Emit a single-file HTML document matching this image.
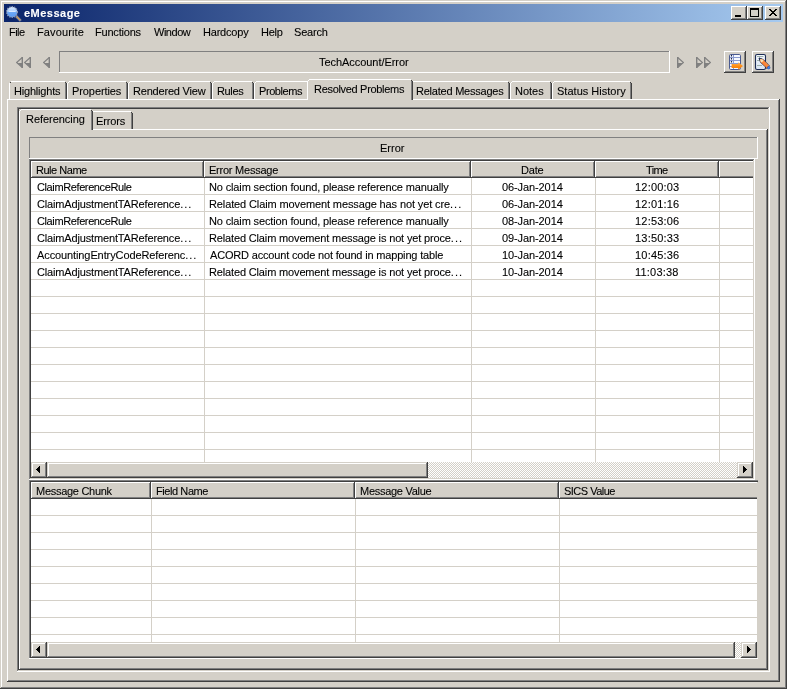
<!DOCTYPE html>
<html><head><meta charset="utf-8"><title>eMessage</title>
<style>
html,body{margin:0;padding:0}
body{width:787px;height:689px;overflow:hidden;background:#d4d0c8;position:relative;font:11px/13px "Liberation Sans",Arial,sans-serif;color:#000}
body>div,body>svg,#tx>span{position:absolute;display:block}
#tx{left:0;top:0;width:787px;height:689px;will-change:transform;-webkit-text-stroke:0.1px}
span{white-space:pre;transform-origin:0 0}
i{font-style:normal;letter-spacing:1px}
</style></head><body>
<div style="left:1px;top:1px;width:784px;height:1px;background:#ffffff;"></div>
<div style="left:1px;top:1px;width:1px;height:686px;background:#ffffff;"></div>
<div style="left:785px;top:1px;width:1px;height:687px;background:#808080;"></div>
<div style="left:1px;top:687px;width:785px;height:1px;background:#808080;"></div>
<div style="left:786px;top:0px;width:1px;height:689px;background:#404040;"></div>
<div style="left:0px;top:688px;width:787px;height:1px;background:#404040;"></div>
<div style="left:4px;top:4px;width:779px;height:18px;background:linear-gradient(to right,#0a246a,#a6caf0);"></div>
<div style="left:731px;top:6px;width:16px;height:14px;background:#d4d0c8;"></div>
<div style="left:731px;top:6px;width:15px;height:1px;background:#ffffff;"></div>
<div style="left:731px;top:6px;width:1px;height:13px;background:#ffffff;"></div>
<div style="left:732px;top:18px;width:14px;height:1px;background:#808080;"></div>
<div style="left:745px;top:7px;width:1px;height:12px;background:#808080;"></div>
<div style="left:731px;top:19px;width:16px;height:1px;background:#404040;"></div>
<div style="left:746px;top:6px;width:1px;height:14px;background:#404040;"></div>
<div style="left:747px;top:6px;width:16px;height:14px;background:#d4d0c8;"></div>
<div style="left:747px;top:6px;width:15px;height:1px;background:#ffffff;"></div>
<div style="left:747px;top:6px;width:1px;height:13px;background:#ffffff;"></div>
<div style="left:748px;top:18px;width:14px;height:1px;background:#808080;"></div>
<div style="left:761px;top:7px;width:1px;height:12px;background:#808080;"></div>
<div style="left:747px;top:19px;width:16px;height:1px;background:#404040;"></div>
<div style="left:762px;top:6px;width:1px;height:14px;background:#404040;"></div>
<div style="left:765px;top:6px;width:16px;height:14px;background:#d4d0c8;"></div>
<div style="left:765px;top:6px;width:15px;height:1px;background:#ffffff;"></div>
<div style="left:765px;top:6px;width:1px;height:13px;background:#ffffff;"></div>
<div style="left:766px;top:18px;width:14px;height:1px;background:#808080;"></div>
<div style="left:779px;top:7px;width:1px;height:12px;background:#808080;"></div>
<div style="left:765px;top:19px;width:16px;height:1px;background:#404040;"></div>
<div style="left:780px;top:6px;width:1px;height:14px;background:#404040;"></div>
<div style="left:735px;top:15px;width:6px;height:2px;background:#000;"></div>
<div style="left:750px;top:8px;width:9px;height:2px;background:#000;"></div>
<div style="left:750px;top:8px;width:1px;height:9px;background:#000;"></div>
<div style="left:758px;top:8px;width:1px;height:9px;background:#000;"></div>
<div style="left:750px;top:16px;width:9px;height:1px;background:#000;"></div>
<svg style="left:769px;top:9px" width="8" height="7" viewBox="0 0 8 7" shape-rendering="crispEdges"><path d="M0 0h2v1h1v1h2v-1h1v-1h2v1h-1v1h-1v1h-1v1h1v1h1v1h1v1h-2v-1h-1v-1h-2v1h-1v1h-2v-1h1v-1h1v-1h1v-1h-1v-1h-1v-1h-1z" fill="#000"/></svg>
<svg style="left:5px;top:4px" width="18" height="18" viewBox="0 0 18 18">
<defs><linearGradient id="lg" x1="0" y1="0" x2="0" y2="1"><stop offset="0" stop-color="#dcebff"/><stop offset="0.45" stop-color="#a8ccfc"/><stop offset="0.55" stop-color="#6aa6f6"/><stop offset="1" stop-color="#5a9af2"/></linearGradient></defs>
<line x1="11" y1="12" x2="15.8" y2="16.8" stroke="#7c86a0" stroke-width="2.6"/>
<line x1="11.8" y1="12.8" x2="15.6" y2="16.6" stroke="#f0a030" stroke-width="1.3" stroke-dasharray="1.1 0.7"/>
<circle cx="7" cy="8" r="5.3" fill="url(#lg)" stroke="#8e9ab4" stroke-width="1.4" stroke-dasharray="1.3 1.1"/>
<rect x="4" y="6.8" width="6.4" height="1" fill="#e6f0ff"/>
</svg>
<svg style="left:16px;top:57px" width="7" height="11" viewBox="0 0 7 11"><path d="M6.3 0.5L0.6 5.5L6.3 10.5" fill="none" stroke="#808080" stroke-width="1.1"/><path d="M1.2 6H7V11z" fill="#808080"/><path d="M6.3 0V11" stroke="#808080" stroke-width="1.4"/></svg>
<svg style="left:24px;top:57px" width="7" height="11" viewBox="0 0 7 11"><path d="M6.3 0.5L0.6 5.5L6.3 10.5" fill="none" stroke="#808080" stroke-width="1.1"/><path d="M1.2 6H7V11z" fill="#808080"/><path d="M6.3 0V11" stroke="#808080" stroke-width="1.4"/></svg>
<svg style="left:43px;top:57px" width="7" height="11" viewBox="0 0 7 11"><path d="M6.3 0.5L0.6 5.5L6.3 10.5" fill="none" stroke="#808080" stroke-width="1.1"/><path d="M1.2 6H7V11z" fill="#808080"/><path d="M6.3 0V11" stroke="#808080" stroke-width="1.4"/></svg>
<svg style="left:677px;top:57px" width="7" height="11" viewBox="0 0 7 11"><path d="M0.7 0.5L6.4 5.5L0.7 10.5" fill="none" stroke="#808080" stroke-width="1.1"/><path d="M5.8 6H0V11z" fill="#808080"/><path d="M0.7 0V11" stroke="#808080" stroke-width="1.4"/></svg>
<svg style="left:696px;top:57px" width="7" height="11" viewBox="0 0 7 11"><path d="M0.7 0.5L6.4 5.5L0.7 10.5" fill="none" stroke="#808080" stroke-width="1.1"/><path d="M5.8 6H0V11z" fill="#808080"/><path d="M0.7 0V11" stroke="#808080" stroke-width="1.4"/></svg>
<svg style="left:704px;top:57px" width="7" height="11" viewBox="0 0 7 11"><path d="M0.7 0.5L6.4 5.5L0.7 10.5" fill="none" stroke="#808080" stroke-width="1.1"/><path d="M5.8 6H0V11z" fill="#808080"/><path d="M0.7 0V11" stroke="#808080" stroke-width="1.4"/></svg>
<div style="left:59px;top:51px;width:610px;height:1px;background:#808080;"></div>
<div style="left:59px;top:51px;width:1px;height:21px;background:#808080;"></div>
<div style="left:59px;top:72px;width:611px;height:1px;background:#ffffff;"></div>
<div style="left:669px;top:51px;width:1px;height:22px;background:#ffffff;"></div>
<div style="left:724px;top:51px;width:21px;height:1px;background:#ffffff;"></div>
<div style="left:724px;top:51px;width:1px;height:21px;background:#ffffff;"></div>
<div style="left:725px;top:71px;width:20px;height:1px;background:#808080;"></div>
<div style="left:744px;top:52px;width:1px;height:20px;background:#808080;"></div>
<div style="left:724px;top:72px;width:22px;height:1px;background:#404040;"></div>
<div style="left:745px;top:51px;width:1px;height:22px;background:#404040;"></div>
<div style="left:752px;top:51px;width:21px;height:1px;background:#ffffff;"></div>
<div style="left:752px;top:51px;width:1px;height:21px;background:#ffffff;"></div>
<div style="left:753px;top:71px;width:20px;height:1px;background:#808080;"></div>
<div style="left:772px;top:52px;width:1px;height:20px;background:#808080;"></div>
<div style="left:752px;top:72px;width:22px;height:1px;background:#404040;"></div>
<div style="left:773px;top:51px;width:1px;height:22px;background:#404040;"></div>
<svg style="left:728px;top:53px" width="16" height="18" viewBox="0 0 16 18">
<defs><linearGradient id="og" x1="0" y1="0" x2="0" y2="1"><stop offset="0" stop-color="#ffb452"/><stop offset="0.55" stop-color="#ff8a10"/><stop offset="1" stop-color="#f07800"/></linearGradient></defs>
<rect x="1.5" y="1.5" width="11" height="15" rx="1.2" fill="#f6f9ff" stroke="#4a5a90"/>
<path d="M5.5 2v14" stroke="#8a9ad0" stroke-width="1"/>
<path d="M2 4.5h10M2 7.5h10M2 10.5h10M2 13.5h3" stroke="#8a9ad0" stroke-width="1"/>
<path d="M3.5 2v1.6M3.5 5v1.6M3.5 8v1.6" stroke="#20284c" stroke-width="1.2"/>
<path d="M3.6 11h6.6v-1.8l4.8 3.8l-4.8 3.8v-1.8h-6.6z" fill="url(#og)"/>
</svg>
<svg style="left:754px;top:53px" width="18" height="18" viewBox="0 0 18 18">
<defs><linearGradient id="pg" x1="0" y1="0" x2="0" y2="1"><stop offset="0" stop-color="#f4f8fe"/><stop offset="1" stop-color="#d8e4f2"/></linearGradient>
<linearGradient id="pn" x1="1" y1="0" x2="0" y2="1"><stop offset="0" stop-color="#ffa860"/><stop offset="1" stop-color="#f86410"/></linearGradient></defs>
<rect x="1.5" y="1.5" width="10" height="15" rx="1.6" fill="url(#pg)" stroke="#1c2c54" stroke-width="1.1"/>
<path d="M3 3.5h6.4M3 7.5h3M3 12.5h5" stroke="#9cb0ac" stroke-width="1"/>
<path d="M5.2 5.2L8.9 6.1L15.6 12.8L12.8 15.6L6.1 8.9z" fill="url(#pn)" stroke="#1c2c54" stroke-width="0.9" stroke-dasharray="1.2 0.5"/>
<path d="M6.1 6.1L8.5 6.6L9.6 7.7L7.7 9.6L6.6 8.5z" fill="#fde2b4"/>
<path d="M5 5l1.6 0.5l-1.1 1.1z" fill="#1c2c54" stroke="#1c2c54" stroke-width="0.8"/>
<circle cx="14.7" cy="14.7" r="1.35" fill="#3c80f0" stroke="#1c3c90" stroke-width="0.5"/>
</svg>
<div style="left:7px;top:99px;width:772px;height:1px;background:#ffffff;"></div>
<div style="left:7px;top:99px;width:1px;height:582px;background:#ffffff;"></div>
<div style="left:778px;top:100px;width:1px;height:581px;background:#808080;"></div>
<div style="left:8px;top:680px;width:771px;height:1px;background:#808080;"></div>
<div style="left:779px;top:99px;width:1px;height:583px;background:#404040;"></div>
<div style="left:7px;top:681px;width:773px;height:1px;background:#404040;"></div>
<div style="left:11px;top:81px;width:54px;height:1px;background:#ffffff;"></div>
<div style="left:9px;top:83px;width:1px;height:16px;background:#ffffff;"></div>
<div style="left:10px;top:82px;width:1px;height:1px;background:#ffffff;"></div>
<div style="left:65px;top:82px;width:1px;height:17px;background:#808080;"></div>
<div style="left:66px;top:83px;width:1px;height:16px;background:#404040;"></div>
<div style="left:65px;top:82px;width:1px;height:1px;background:#404040;"></div>
<div style="left:69px;top:81px;width:57px;height:1px;background:#ffffff;"></div>
<div style="left:67px;top:83px;width:1px;height:16px;background:#ffffff;"></div>
<div style="left:68px;top:82px;width:1px;height:1px;background:#ffffff;"></div>
<div style="left:126px;top:82px;width:1px;height:17px;background:#808080;"></div>
<div style="left:127px;top:83px;width:1px;height:16px;background:#404040;"></div>
<div style="left:126px;top:82px;width:1px;height:1px;background:#404040;"></div>
<div style="left:130px;top:81px;width:80px;height:1px;background:#ffffff;"></div>
<div style="left:128px;top:83px;width:1px;height:16px;background:#ffffff;"></div>
<div style="left:129px;top:82px;width:1px;height:1px;background:#ffffff;"></div>
<div style="left:210px;top:82px;width:1px;height:17px;background:#808080;"></div>
<div style="left:211px;top:83px;width:1px;height:16px;background:#404040;"></div>
<div style="left:210px;top:82px;width:1px;height:1px;background:#404040;"></div>
<div style="left:214px;top:81px;width:38px;height:1px;background:#ffffff;"></div>
<div style="left:212px;top:83px;width:1px;height:16px;background:#ffffff;"></div>
<div style="left:213px;top:82px;width:1px;height:1px;background:#ffffff;"></div>
<div style="left:252px;top:82px;width:1px;height:17px;background:#808080;"></div>
<div style="left:253px;top:83px;width:1px;height:16px;background:#404040;"></div>
<div style="left:252px;top:82px;width:1px;height:1px;background:#404040;"></div>
<div style="left:256px;top:81px;width:52px;height:1px;background:#ffffff;"></div>
<div style="left:254px;top:83px;width:1px;height:16px;background:#ffffff;"></div>
<div style="left:255px;top:82px;width:1px;height:1px;background:#ffffff;"></div>
<div style="left:411px;top:81px;width:97px;height:1px;background:#ffffff;"></div>
<div style="left:508px;top:82px;width:1px;height:17px;background:#808080;"></div>
<div style="left:509px;top:83px;width:1px;height:16px;background:#404040;"></div>
<div style="left:508px;top:82px;width:1px;height:1px;background:#404040;"></div>
<div style="left:512px;top:81px;width:38px;height:1px;background:#ffffff;"></div>
<div style="left:510px;top:83px;width:1px;height:16px;background:#ffffff;"></div>
<div style="left:511px;top:82px;width:1px;height:1px;background:#ffffff;"></div>
<div style="left:550px;top:82px;width:1px;height:17px;background:#808080;"></div>
<div style="left:551px;top:83px;width:1px;height:16px;background:#404040;"></div>
<div style="left:550px;top:82px;width:1px;height:1px;background:#404040;"></div>
<div style="left:554px;top:81px;width:76px;height:1px;background:#ffffff;"></div>
<div style="left:552px;top:83px;width:1px;height:16px;background:#ffffff;"></div>
<div style="left:553px;top:82px;width:1px;height:1px;background:#ffffff;"></div>
<div style="left:630px;top:82px;width:1px;height:17px;background:#808080;"></div>
<div style="left:631px;top:83px;width:1px;height:16px;background:#404040;"></div>
<div style="left:630px;top:82px;width:1px;height:1px;background:#404040;"></div>
<div style="left:307px;top:79px;width:106px;height:21px;background:#d4d0c8;"></div>
<div style="left:309px;top:79px;width:102px;height:1px;background:#ffffff;"></div>
<div style="left:307px;top:81px;width:1px;height:19px;background:#ffffff;"></div>
<div style="left:308px;top:80px;width:1px;height:1px;background:#ffffff;"></div>
<div style="left:411px;top:80px;width:1px;height:20px;background:#808080;"></div>
<div style="left:412px;top:81px;width:1px;height:19px;background:#404040;"></div>
<div style="left:411px;top:80px;width:1px;height:1px;background:#404040;"></div>
<div style="left:10px;top:82px;width:1px;height:1px;background:#404040;"></div>
<div style="left:17px;top:107px;width:752px;height:1px;background:#808080;"></div>
<div style="left:17px;top:107px;width:1px;height:564px;background:#808080;"></div>
<div style="left:18px;top:108px;width:750px;height:1px;background:#404040;"></div>
<div style="left:18px;top:108px;width:1px;height:562px;background:#404040;"></div>
<div style="left:17px;top:671px;width:753px;height:1px;background:#ffffff;"></div>
<div style="left:769px;top:107px;width:1px;height:565px;background:#ffffff;"></div>
<div style="left:18px;top:670px;width:751px;height:1px;background:#d4d0c8;"></div>
<div style="left:768px;top:108px;width:1px;height:563px;background:#d4d0c8;"></div>
<div style="left:19px;top:129px;width:748px;height:1px;background:#ffffff;"></div>
<div style="left:19px;top:129px;width:1px;height:540px;background:#ffffff;"></div>
<div style="left:766px;top:130px;width:1px;height:539px;background:#808080;"></div>
<div style="left:20px;top:668px;width:747px;height:1px;background:#808080;"></div>
<div style="left:767px;top:129px;width:1px;height:541px;background:#404040;"></div>
<div style="left:19px;top:669px;width:749px;height:1px;background:#404040;"></div>
<div style="left:93px;top:111px;width:38px;height:1px;background:#ffffff;"></div>
<div style="left:131px;top:112px;width:1px;height:17px;background:#808080;"></div>
<div style="left:132px;top:113px;width:1px;height:16px;background:#404040;"></div>
<div style="left:131px;top:112px;width:1px;height:1px;background:#404040;"></div>
<div style="left:19px;top:109px;width:74px;height:21px;background:#d4d0c8;"></div>
<div style="left:21px;top:109px;width:70px;height:1px;background:#ffffff;"></div>
<div style="left:19px;top:111px;width:1px;height:19px;background:#ffffff;"></div>
<div style="left:20px;top:110px;width:1px;height:1px;background:#ffffff;"></div>
<div style="left:91px;top:110px;width:1px;height:20px;background:#808080;"></div>
<div style="left:92px;top:111px;width:1px;height:19px;background:#404040;"></div>
<div style="left:91px;top:110px;width:1px;height:1px;background:#404040;"></div>
<div style="left:29px;top:137px;width:728px;height:1px;background:#808080;"></div>
<div style="left:29px;top:137px;width:1px;height:21px;background:#808080;"></div>
<div style="left:29px;top:158px;width:729px;height:1px;background:#ffffff;"></div>
<div style="left:757px;top:137px;width:1px;height:22px;background:#ffffff;"></div>
<div style="left:29px;top:159px;width:725px;height:1px;background:#808080;"></div>
<div style="left:29px;top:159px;width:1px;height:320px;background:#808080;"></div>
<div style="left:30px;top:160px;width:723px;height:1px;background:#404040;"></div>
<div style="left:30px;top:160px;width:1px;height:318px;background:#404040;"></div>
<div style="left:29px;top:479px;width:726px;height:1px;background:#ffffff;"></div>
<div style="left:754px;top:159px;width:1px;height:321px;background:#ffffff;"></div>
<div style="left:30px;top:478px;width:724px;height:1px;background:#d4d0c8;"></div>
<div style="left:753px;top:160px;width:1px;height:319px;background:#d4d0c8;"></div>
<div style="left:31px;top:161px;width:722px;height:317px;background:#ffffff;"></div>
<div style="left:31px;top:161px;width:173px;height:17px;background:#d4d0c8;"></div>
<div style="left:31px;top:161px;width:173px;height:1px;background:#ffffff;"></div>
<div style="left:31px;top:161px;width:1px;height:16px;background:#ffffff;"></div>
<div style="left:32px;top:176px;width:172px;height:1px;background:#808080;"></div>
<div style="left:31px;top:177px;width:173px;height:1px;background:#404040;"></div>
<div style="left:202px;top:162px;width:1px;height:15px;background:#808080;"></div>
<div style="left:203px;top:161px;width:1px;height:17px;background:#404040;"></div>
<div style="left:204px;top:161px;width:267px;height:17px;background:#d4d0c8;"></div>
<div style="left:204px;top:161px;width:267px;height:1px;background:#ffffff;"></div>
<div style="left:204px;top:161px;width:1px;height:16px;background:#ffffff;"></div>
<div style="left:205px;top:176px;width:266px;height:1px;background:#808080;"></div>
<div style="left:204px;top:177px;width:267px;height:1px;background:#404040;"></div>
<div style="left:469px;top:162px;width:1px;height:15px;background:#808080;"></div>
<div style="left:470px;top:161px;width:1px;height:17px;background:#404040;"></div>
<div style="left:471px;top:161px;width:124px;height:17px;background:#d4d0c8;"></div>
<div style="left:471px;top:161px;width:124px;height:1px;background:#ffffff;"></div>
<div style="left:471px;top:161px;width:1px;height:16px;background:#ffffff;"></div>
<div style="left:472px;top:176px;width:123px;height:1px;background:#808080;"></div>
<div style="left:471px;top:177px;width:124px;height:1px;background:#404040;"></div>
<div style="left:593px;top:162px;width:1px;height:15px;background:#808080;"></div>
<div style="left:594px;top:161px;width:1px;height:17px;background:#404040;"></div>
<div style="left:595px;top:161px;width:124px;height:17px;background:#d4d0c8;"></div>
<div style="left:595px;top:161px;width:124px;height:1px;background:#ffffff;"></div>
<div style="left:595px;top:161px;width:1px;height:16px;background:#ffffff;"></div>
<div style="left:596px;top:176px;width:123px;height:1px;background:#808080;"></div>
<div style="left:595px;top:177px;width:124px;height:1px;background:#404040;"></div>
<div style="left:717px;top:162px;width:1px;height:15px;background:#808080;"></div>
<div style="left:718px;top:161px;width:1px;height:17px;background:#404040;"></div>
<div style="left:719px;top:161px;width:34px;height:17px;background:#d4d0c8;"></div>
<div style="left:719px;top:161px;width:34px;height:1px;background:#ffffff;"></div>
<div style="left:719px;top:161px;width:1px;height:16px;background:#ffffff;"></div>
<div style="left:720px;top:176px;width:33px;height:1px;background:#808080;"></div>
<div style="left:719px;top:177px;width:34px;height:1px;background:#404040;"></div>
<div style="left:31px;top:194px;width:722px;height:1px;background:#d4d0c8;"></div>
<div style="left:31px;top:211px;width:722px;height:1px;background:#d4d0c8;"></div>
<div style="left:31px;top:228px;width:722px;height:1px;background:#d4d0c8;"></div>
<div style="left:31px;top:245px;width:722px;height:1px;background:#d4d0c8;"></div>
<div style="left:31px;top:262px;width:722px;height:1px;background:#d4d0c8;"></div>
<div style="left:31px;top:279px;width:722px;height:1px;background:#d4d0c8;"></div>
<div style="left:31px;top:296px;width:722px;height:1px;background:#d4d0c8;"></div>
<div style="left:31px;top:313px;width:722px;height:1px;background:#d4d0c8;"></div>
<div style="left:31px;top:330px;width:722px;height:1px;background:#d4d0c8;"></div>
<div style="left:31px;top:347px;width:722px;height:1px;background:#d4d0c8;"></div>
<div style="left:31px;top:364px;width:722px;height:1px;background:#d4d0c8;"></div>
<div style="left:31px;top:381px;width:722px;height:1px;background:#d4d0c8;"></div>
<div style="left:31px;top:398px;width:722px;height:1px;background:#d4d0c8;"></div>
<div style="left:31px;top:415px;width:722px;height:1px;background:#d4d0c8;"></div>
<div style="left:31px;top:432px;width:722px;height:1px;background:#d4d0c8;"></div>
<div style="left:31px;top:449px;width:722px;height:1px;background:#d4d0c8;"></div>
<div style="left:204px;top:178px;width:1px;height:284px;background:#d4d0c8;"></div>
<div style="left:471px;top:178px;width:1px;height:284px;background:#d4d0c8;"></div>
<div style="left:595px;top:178px;width:1px;height:284px;background:#d4d0c8;"></div>
<div style="left:719px;top:178px;width:1px;height:284px;background:#d4d0c8;"></div>
<div style="left:31px;top:462px;width:722px;height:16px;background:repeating-conic-gradient(#fff 0 25%,#d4d0c8 0 50%) 0 0/2px 2px;"></div>
<div style="left:31px;top:462px;width:16px;height:16px;background:#d4d0c8;"></div>
<div style="left:32px;top:463px;width:13px;height:1px;background:#ffffff;"></div>
<div style="left:32px;top:463px;width:1px;height:13px;background:#ffffff;"></div>
<div style="left:32px;top:476px;width:14px;height:1px;background:#808080;"></div>
<div style="left:45px;top:463px;width:1px;height:14px;background:#808080;"></div>
<div style="left:31px;top:477px;width:16px;height:1px;background:#404040;"></div>
<div style="left:46px;top:462px;width:1px;height:16px;background:#404040;"></div>
<div style="left:737px;top:462px;width:16px;height:16px;background:#d4d0c8;"></div>
<div style="left:738px;top:463px;width:13px;height:1px;background:#ffffff;"></div>
<div style="left:738px;top:463px;width:1px;height:13px;background:#ffffff;"></div>
<div style="left:738px;top:476px;width:14px;height:1px;background:#808080;"></div>
<div style="left:751px;top:463px;width:1px;height:14px;background:#808080;"></div>
<div style="left:737px;top:477px;width:16px;height:1px;background:#404040;"></div>
<div style="left:752px;top:462px;width:1px;height:16px;background:#404040;"></div>
<div style="left:47px;top:462px;width:381px;height:16px;background:#d4d0c8;"></div>
<div style="left:48px;top:463px;width:378px;height:1px;background:#ffffff;"></div>
<div style="left:48px;top:463px;width:1px;height:13px;background:#ffffff;"></div>
<div style="left:48px;top:476px;width:379px;height:1px;background:#808080;"></div>
<div style="left:426px;top:463px;width:1px;height:14px;background:#808080;"></div>
<div style="left:47px;top:477px;width:381px;height:1px;background:#404040;"></div>
<div style="left:427px;top:462px;width:1px;height:16px;background:#404040;"></div>
<svg style="left:36px;top:466px" width="4" height="7" viewBox="0 0 4 7" shape-rendering="crispEdges"><path d="M4 0v7h-1v-1h-1v-1h-1v-1h-1v-1h1v-1h1v-1h1v-1z" fill="#000"/></svg>
<svg style="left:743px;top:466px" width="4" height="7" viewBox="0 0 4 7" shape-rendering="crispEdges"><path d="M0 0v7h1v-1h1v-1h1v-1h1v-1h-1v-1h-1v-1h-1v-1z" fill="#000"/></svg>
<div style="left:29px;top:480px;width:729px;height:1px;background:#808080;"></div>
<div style="left:29px;top:480px;width:1px;height:178px;background:#808080;"></div>
<div style="left:30px;top:481px;width:728px;height:1px;background:#404040;"></div>
<div style="left:30px;top:481px;width:1px;height:177px;background:#404040;"></div>
<div style="left:31px;top:482px;width:726px;height:176px;background:#ffffff;"></div>
<div style="left:29px;top:658px;width:729px;height:1px;background:#ffffff;"></div>
<div style="left:31px;top:482px;width:120px;height:17px;background:#d4d0c8;"></div>
<div style="left:31px;top:482px;width:120px;height:1px;background:#ffffff;"></div>
<div style="left:31px;top:482px;width:1px;height:16px;background:#ffffff;"></div>
<div style="left:32px;top:497px;width:119px;height:1px;background:#808080;"></div>
<div style="left:31px;top:498px;width:120px;height:1px;background:#404040;"></div>
<div style="left:149px;top:483px;width:1px;height:15px;background:#808080;"></div>
<div style="left:150px;top:482px;width:1px;height:17px;background:#404040;"></div>
<div style="left:151px;top:482px;width:204px;height:17px;background:#d4d0c8;"></div>
<div style="left:151px;top:482px;width:204px;height:1px;background:#ffffff;"></div>
<div style="left:151px;top:482px;width:1px;height:16px;background:#ffffff;"></div>
<div style="left:152px;top:497px;width:203px;height:1px;background:#808080;"></div>
<div style="left:151px;top:498px;width:204px;height:1px;background:#404040;"></div>
<div style="left:353px;top:483px;width:1px;height:15px;background:#808080;"></div>
<div style="left:354px;top:482px;width:1px;height:17px;background:#404040;"></div>
<div style="left:355px;top:482px;width:204px;height:17px;background:#d4d0c8;"></div>
<div style="left:355px;top:482px;width:204px;height:1px;background:#ffffff;"></div>
<div style="left:355px;top:482px;width:1px;height:16px;background:#ffffff;"></div>
<div style="left:356px;top:497px;width:203px;height:1px;background:#808080;"></div>
<div style="left:355px;top:498px;width:204px;height:1px;background:#404040;"></div>
<div style="left:557px;top:483px;width:1px;height:15px;background:#808080;"></div>
<div style="left:558px;top:482px;width:1px;height:17px;background:#404040;"></div>
<div style="left:559px;top:482px;width:198px;height:17px;background:#d4d0c8;"></div>
<div style="left:559px;top:482px;width:198px;height:1px;background:#ffffff;"></div>
<div style="left:559px;top:482px;width:1px;height:16px;background:#ffffff;"></div>
<div style="left:560px;top:497px;width:197px;height:1px;background:#808080;"></div>
<div style="left:559px;top:498px;width:198px;height:1px;background:#404040;"></div>
<div style="left:31px;top:515px;width:726px;height:1px;background:#d4d0c8;"></div>
<div style="left:31px;top:532px;width:726px;height:1px;background:#d4d0c8;"></div>
<div style="left:31px;top:549px;width:726px;height:1px;background:#d4d0c8;"></div>
<div style="left:31px;top:566px;width:726px;height:1px;background:#d4d0c8;"></div>
<div style="left:31px;top:583px;width:726px;height:1px;background:#d4d0c8;"></div>
<div style="left:31px;top:600px;width:726px;height:1px;background:#d4d0c8;"></div>
<div style="left:31px;top:617px;width:726px;height:1px;background:#d4d0c8;"></div>
<div style="left:31px;top:634px;width:726px;height:1px;background:#d4d0c8;"></div>
<div style="left:151px;top:499px;width:1px;height:143px;background:#d4d0c8;"></div>
<div style="left:355px;top:499px;width:1px;height:143px;background:#d4d0c8;"></div>
<div style="left:559px;top:499px;width:1px;height:143px;background:#d4d0c8;"></div>
<div style="left:31px;top:642px;width:726px;height:16px;background:repeating-conic-gradient(#fff 0 25%,#d4d0c8 0 50%) 0 0/2px 2px;"></div>
<div style="left:31px;top:642px;width:16px;height:16px;background:#d4d0c8;"></div>
<div style="left:32px;top:643px;width:13px;height:1px;background:#ffffff;"></div>
<div style="left:32px;top:643px;width:1px;height:13px;background:#ffffff;"></div>
<div style="left:32px;top:656px;width:14px;height:1px;background:#808080;"></div>
<div style="left:45px;top:643px;width:1px;height:14px;background:#808080;"></div>
<div style="left:31px;top:657px;width:16px;height:1px;background:#404040;"></div>
<div style="left:46px;top:642px;width:1px;height:16px;background:#404040;"></div>
<div style="left:741px;top:642px;width:16px;height:16px;background:#d4d0c8;"></div>
<div style="left:742px;top:643px;width:13px;height:1px;background:#ffffff;"></div>
<div style="left:742px;top:643px;width:1px;height:13px;background:#ffffff;"></div>
<div style="left:742px;top:656px;width:14px;height:1px;background:#808080;"></div>
<div style="left:755px;top:643px;width:1px;height:14px;background:#808080;"></div>
<div style="left:741px;top:657px;width:16px;height:1px;background:#404040;"></div>
<div style="left:756px;top:642px;width:1px;height:16px;background:#404040;"></div>
<div style="left:47px;top:642px;width:688px;height:16px;background:#d4d0c8;"></div>
<div style="left:48px;top:643px;width:685px;height:1px;background:#ffffff;"></div>
<div style="left:48px;top:643px;width:1px;height:13px;background:#ffffff;"></div>
<div style="left:48px;top:656px;width:686px;height:1px;background:#808080;"></div>
<div style="left:733px;top:643px;width:1px;height:14px;background:#808080;"></div>
<div style="left:47px;top:657px;width:688px;height:1px;background:#404040;"></div>
<div style="left:734px;top:642px;width:1px;height:16px;background:#404040;"></div>
<svg style="left:36px;top:646px" width="4" height="7" viewBox="0 0 4 7" shape-rendering="crispEdges"><path d="M4 0v7h-1v-1h-1v-1h-1v-1h-1v-1h1v-1h1v-1h1v-1z" fill="#000"/></svg>
<svg style="left:747px;top:646px" width="4" height="7" viewBox="0 0 4 7" shape-rendering="crispEdges"><path d="M0 0v7h1v-1h1v-1h1v-1h1v-1h-1v-1h-1v-1h-1v-1z" fill="#000"/></svg>
<div id="tx">
<span style="left:24px;top:7px;letter-spacing:0.486px;color:#fff;font-weight:bold;">eMessage</span>
<span style="left:9px;top:26px;letter-spacing:-0.533px;">File</span>
<span style="left:37px;top:26px;letter-spacing:0.125px;">Favourite</span>
<span style="left:95px;top:26px;letter-spacing:-0.200px;">Functions</span>
<span style="left:154px;top:26px;letter-spacing:-0.480px;">Window</span>
<span style="left:203px;top:26px;letter-spacing:-0.200px;">Hardcopy</span>
<span style="left:261px;top:26px;letter-spacing:-0.267px;">Help</span>
<span style="left:294px;top:26px;letter-spacing:-0.200px;">Search</span>
<span style="left:319px;top:56px;letter-spacing:-0.050px;">TechAccount/Error</span>
<span style="left:14px;top:85px;letter-spacing:-0.200px;">Highlights</span>
<span style="left:72px;top:85px;letter-spacing:-0.089px;">Properties</span>
<span style="left:133px;top:85px;letter-spacing:-0.200px;">Rendered View</span>
<span style="left:217px;top:85px;letter-spacing:-0.350px;">Rules</span>
<span style="left:259px;top:85px;letter-spacing:-0.429px;">Problems</span>
<span style="left:314px;top:83px;letter-spacing:-0.312px;">Resolved Problems</span>
<span style="left:416px;top:85px;letter-spacing:-0.227px;">Related Messages</span>
<span style="left:515px;top:85px;letter-spacing:0.000px;">Notes</span>
<span style="left:557px;top:85px;letter-spacing:0.015px;">Status History</span>
<span style="left:26px;top:113px;letter-spacing:-0.040px;">Referencing</span>
<span style="left:96px;top:115px;letter-spacing:-0.120px;">Errors</span>
<span style="left:380px;top:142px;letter-spacing:0.000px;">Error</span>
<span style="left:36px;top:164px;letter-spacing:-0.475px;">Rule Name</span>
<span style="left:209px;top:164px;letter-spacing:-0.233px;">Error Message</span>
<span style="left:521px;top:164px;letter-spacing:-0.200px;">Date</span>
<span style="left:646px;top:164px;letter-spacing:-0.600px;">Time</span>
<span style="left:36px;top:485px;letter-spacing:-0.283px;">Message Chunk</span>
<span style="left:156px;top:485px;letter-spacing:-0.422px;">Field Name</span>
<span style="left:360px;top:485px;letter-spacing:-0.283px;">Message Value</span>
<span style="left:564px;top:485px;letter-spacing:-0.511px;">SICS Value</span>
<span style="left:37px;top:181px;letter-spacing:-0.388px;">ClaimReferenceRule</span>
<span style="left:209px;top:181px;letter-spacing:-0.138px;">No claim section found, please reference manually</span>
<span style="left:502px;top:181px;letter-spacing:-0.100px;">06-Jan-2014</span>
<span style="left:635px;top:181px;letter-spacing:0.200px;">12:00:03</span>
<span style="left:37px;top:198px;letter-spacing:-0.154px;">ClaimAdjustmentTAReference<i>...</i></span>
<span style="left:209px;top:198px;letter-spacing:-0.117px;">Related Claim movement message has not yet cre<i>...</i></span>
<span style="left:502px;top:198px;letter-spacing:-0.100px;">06-Jan-2014</span>
<span style="left:635px;top:198px;letter-spacing:0.200px;">12:01:16</span>
<span style="left:37px;top:215px;letter-spacing:-0.388px;">ClaimReferenceRule</span>
<span style="left:209px;top:215px;letter-spacing:-0.138px;">No claim section found, please reference manually</span>
<span style="left:502px;top:215px;letter-spacing:-0.100px;">08-Jan-2014</span>
<span style="left:635px;top:215px;letter-spacing:0.200px;">12:53:06</span>
<span style="left:37px;top:232px;letter-spacing:-0.154px;">ClaimAdjustmentTAReference<i>...</i></span>
<span style="left:209px;top:232px;letter-spacing:-0.149px;">Related Claim movement message is not yet proce<i>...</i></span>
<span style="left:502px;top:232px;letter-spacing:-0.100px;">09-Jan-2014</span>
<span style="left:635px;top:232px;letter-spacing:0.200px;">13:50:33</span>
<span style="left:37px;top:249px;letter-spacing:-0.104px;">AccountingEntryCodeReferenc<i>...</i></span>
<span style="left:210px;top:249px;letter-spacing:-0.173px;">ACORD account code not found in mapping table</span>
<span style="left:502px;top:249px;letter-spacing:-0.100px;">10-Jan-2014</span>
<span style="left:635px;top:249px;letter-spacing:0.200px;">10:45:36</span>
<span style="left:37px;top:266px;letter-spacing:-0.154px;">ClaimAdjustmentTAReference<i>...</i></span>
<span style="left:209px;top:266px;letter-spacing:-0.149px;">Related Claim movement message is not yet proce<i>...</i></span>
<span style="left:502px;top:266px;letter-spacing:-0.100px;">10-Jan-2014</span>
<span style="left:635px;top:266px;letter-spacing:0.200px;">11:03:38</span>
</div>
</body></html>
